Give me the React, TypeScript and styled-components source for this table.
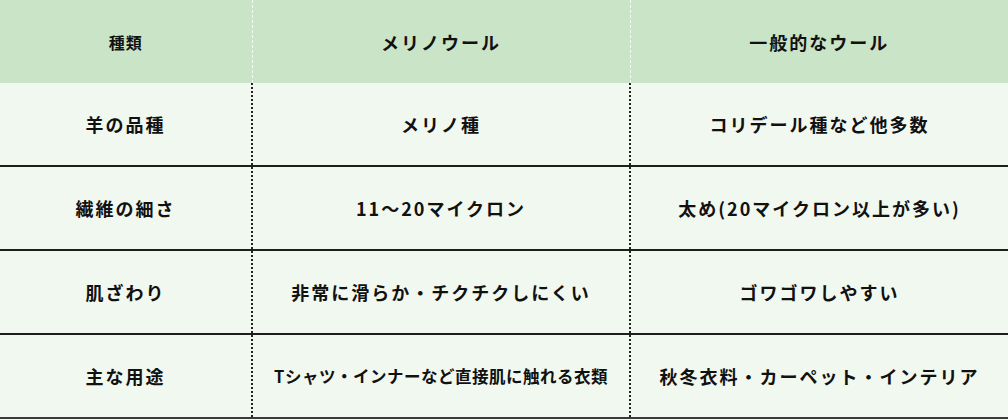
import React from "react";
import styled, { createGlobalStyle } from "styled-components";

const Global = createGlobalStyle`
  html, body { margin: 0; padding: 0; background: #f1f8ef; }
  body { font-family: "Noto Sans CJK JP", "Noto Sans", sans-serif; color: #111; }
`;

const Table = styled.table`
  width: 1008px;
  border-collapse: collapse;
  table-layout: fixed;
  background: #f1f8ef;
  border-bottom: 2px solid #3a3a3a;
`;

const HeadCell = styled.th<{ $small?: boolean }>`
  height: 83px;
  padding: 0;
  background: #c9e4c7;
  font-weight: 700;
  font-size: ${(p) => (p.$small ? "16px" : "18px")};
  letter-spacing: ${(p) => (p.$small ? "1px" : "2px")};
  text-align: center;
  vertical-align: middle;
  border-left: 1px dashed rgba(255, 255, 255, 0.8);
  &:first-child { border-left: none; }
`;

const Row = styled.tr`
  border-bottom: 2px solid #1e1e1e;
  &:last-child { border-bottom: none; }
`;

const Cell = styled.td<{ $small?: boolean }>`
  height: 82px;
  padding: 0;
  font-weight: 700;
  font-size: ${(p) => (p.$small ? "16.5px" : "18px")};
  letter-spacing: ${(p) => (p.$small ? "0.5px" : "2px")};
  text-align: center;
  vertical-align: middle;
  border-left: 2px dotted #222;
  &:first-child { border-left: none; }
`;

const rows: [string, string, string, boolean?][] = [
  ["羊の品種", "メリノ種", "コリデール種など他多数"],
  ["繊維の細さ", "11〜20マイクロン", "太め(20マイクロン以上が多い)"],
  ["肌ざわり", "非常に滑らか・チクチクしにくい", "ゴワゴワしやすい"],
  ["主な用途", "Tシャツ・インナーなど直接肌に触れる衣類", "秋冬衣料・カーペット・インテリア", true],
];

export default function App() {
  return (
    <>
      <Global />
      <Table>
        <colgroup>
          <col style={{ width: 252 }} />
          <col style={{ width: 378 }} />
          <col style={{ width: 378 }} />
        </colgroup>
        <thead>
          <tr>
            <HeadCell $small>種類</HeadCell>
            <HeadCell>メリノウール</HeadCell>
            <HeadCell>一般的なウール</HeadCell>
          </tr>
        </thead>
        <tbody>
          {rows.map(([a, b, c, small]) => (
            <Row key={a}>
              <Cell>{a}</Cell>
              <Cell $small={small}>{b}</Cell>
              <Cell>{c}</Cell>
            </Row>
          ))}
        </tbody>
      </Table>
    </>
  );
}
